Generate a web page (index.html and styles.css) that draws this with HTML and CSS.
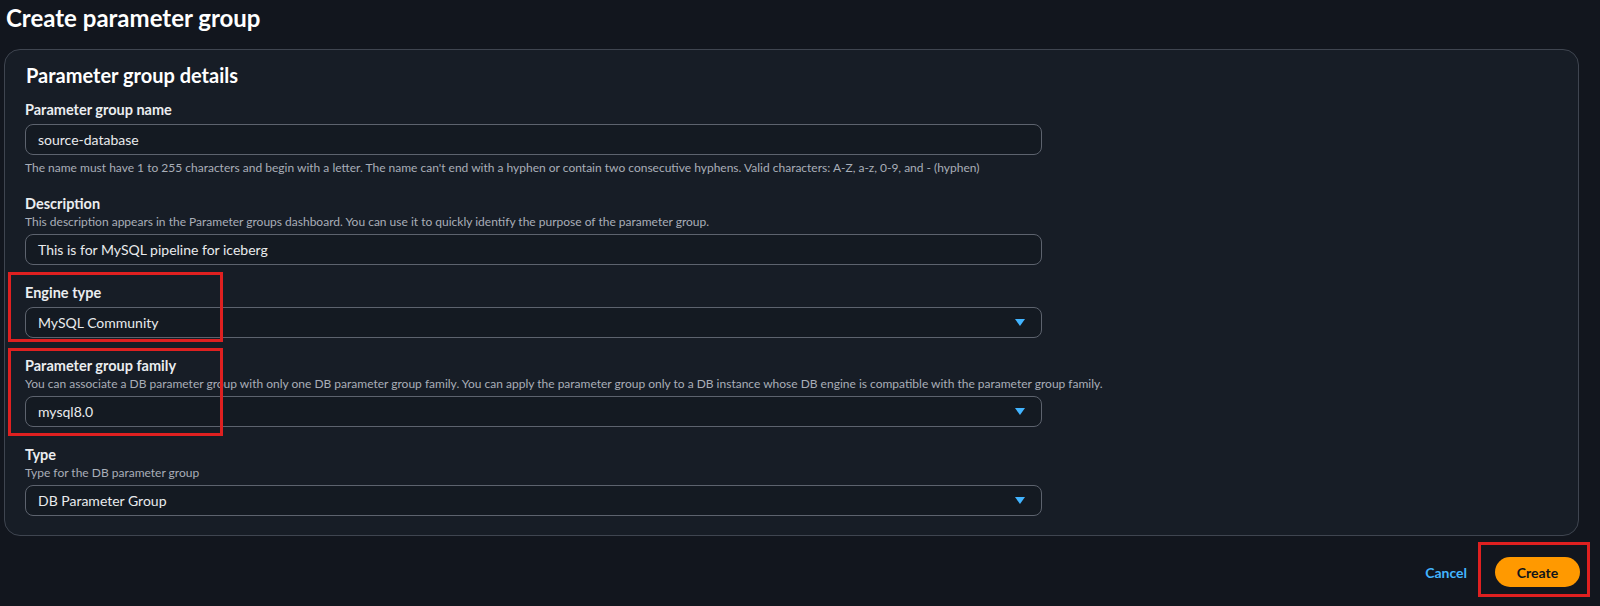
FILE: index.html
```html
<!DOCTYPE html>
<html lang="en">
<head>
    <meta charset="UTF-8">
    <meta name="viewport" content="width=device-width, initial-scale=1.0">
    <title>Create parameter group</title>
    <link rel="stylesheet" href="styles.css">
</head>
<body>
    <div class="page">
        <h1 class="page-title">Create parameter group</h1>

        <div class="container">
            <h2>Parameter group details</h2>

            <div class="field">
                <label class="field-label">Parameter group name</label>
                <div class="input">source-database</div>
                <div class="field-hint">The name must have 1 to 255 characters and begin with a letter. The name can't end with a hyphen or contain two consecutive hyphens. Valid characters: A-Z, a-z, 0-9, and - (hyphen)</div>
            </div>

            <div class="field">
                <label class="field-label">Description</label>
                <div class="field-desc">This description appears in the Parameter groups dashboard. You can use it to quickly identify the purpose of the parameter group.</div>
                <div class="input">This is for MySQL pipeline for iceberg</div>
            </div>

            <div class="field">
                <label class="field-label">Engine type</label>
                <div class="input select">
                    <span>MySQL Community</span>
                    <svg class="caret" width="10" height="7" viewBox="0 0 10 7"><path d="M0 0h10L5 7z"/></svg>
                </div>
            </div>

            <div class="field">
                <label class="field-label">Parameter group family</label>
                <div class="field-desc">You can associate a DB parameter group with only one DB parameter group family. You can apply the parameter group only to a DB instance whose DB engine is compatible with the parameter group family.</div>
                <div class="input select">
                    <span>mysql8.0</span>
                    <svg class="caret" width="10" height="7" viewBox="0 0 10 7"><path d="M0 0h10L5 7z"/></svg>
                </div>
            </div>

            <div class="field">
                <label class="field-label">Type</label>
                <div class="field-desc">Type for the DB parameter group</div>
                <div class="input select">
                    <span>DB Parameter Group</span>
                    <svg class="caret" width="10" height="7" viewBox="0 0 10 7"><path d="M0 0h10L5 7z"/></svg>
                </div>
            </div>
        </div>

        <div class="actions">
            <a class="link-btn" href="#">Cancel</a>
            <button class="primary-btn">Create</button>
        </div>

        <!-- annotation boxes -->
        <div class="mark mark-engine"></div>
        <div class="mark mark-family"></div>
        <div class="mark mark-create"></div>
    </div>
</body>
</html>
```

FILE: styles.css
```css
body, html {
    margin: 0;
    padding: 0;
    background-color: #12161e;
    font-family: Lato, "Open Sans", sans-serif;
    color: #e3e5e8;
}
.page {
    position: relative;
    width: 1600px;
    height: 606px;
}
.page-title {
    margin: 0;
    padding-left: 6px;
    font-size: 24px;
    line-height: 36px;
    font-weight: 700;
    color: #ffffff;
}
.container {
    margin: 13px 21px 0 4px;
    padding: 13px 20px 19px 20px;
    background-color: #171d26;
    border: 1px solid #3f4550;
    border-radius: 16px;
    display: flex;
    flex-direction: column;
    gap: 18px;
}
.container h2 {
    margin: 0 0 -5px 1px;
    font-size: 20px;
    line-height: 24px;
    font-weight: 700;
    color: #ffffff;
}
.field {
    display: flex;
    flex-direction: column;
}
.field-label {
    font-size: 14.5px;
    line-height: 20px;
    font-weight: 700;
    color: #ebedf0;
}
.field-desc, .field-hint {
    font-size: 12px;
    line-height: 16px;
    color: #a9aeb8;
}
.field-hint {
    margin-top: 5px;
}
.input {
    width: 1017px;
    height: 31px;
    margin-top: 4px;
    box-sizing: border-box;
    padding: 0 16px 0 12px;
    background-color: #141a22;
    border: 1px solid #5d636e;
    border-radius: 8px;
    font-size: 14px;
    line-height: 29px;
    color: #e9ebed;
}
.select {
    display: flex;
    align-items: center;
    justify-content: space-between;
}
.caret {
    fill: #42b4ff;
}
.actions {
    display: flex;
    justify-content: flex-end;
    align-items: center;
    gap: 28px;
    margin: 21px 20px 0 0;
}
.link-btn {
    color: #42b4ff;
    font-size: 14px;
    font-weight: 700;
    text-decoration: none;
}
.primary-btn {
    width: 85px;
    height: 30px;
    border: none;
    border-radius: 15px;
    background-color: #ff9900;
    color: #0f141a;
    font-family: inherit;
    font-size: 14px;
    font-weight: 700;
    cursor: pointer;
}
.mark {
    position: absolute;
    box-sizing: border-box;
    border: 3px solid #df2020;
}
.mark-engine { left: 8px; top: 272px; width: 215px; height: 70px; }
.mark-family { left: 8px; top: 348px; width: 215px; height: 88px; }
.mark-create { left: 1478px; top: 542px; width: 112px; height: 55px; }
```
